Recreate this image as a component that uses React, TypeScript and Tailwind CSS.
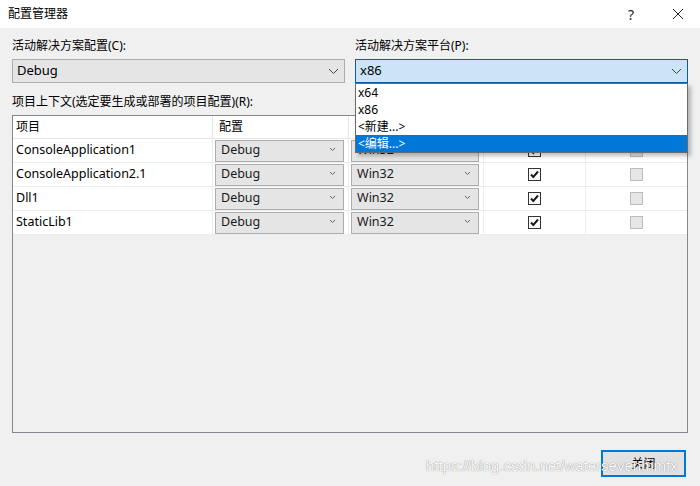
import React from "react";

const font = { fontFamily: '"Segoe UI", "Noto Sans", "Noto Sans CJK SC", sans-serif' };

const Chevron = ({ small = false }: { small?: boolean }) =>
  small ? (
    <svg width="7" height="5" viewBox="0 0 7 5" className="shrink-0 mb-[3px]">
      <polyline points="1,1 3.5,3.5 6,1" fill="none" stroke="#606060" strokeWidth="1" />
    </svg>
  ) : (
    <svg width="11" height="7" viewBox="0 0 11 7" className="shrink-0">
      <polyline points="1,1 5.5,5.5 10,1" fill="none" stroke="#444" strokeWidth="1" />
    </svg>
  );

const CellCombo = ({ value }: { value: string }) => (
  <div className="mx-[2px] h-[22px] w-full flex items-center justify-between border border-[#adadad] bg-[#e5e5e5] pl-[5px] pr-[7px] text-[12.5px] text-[#1a1a1a]">
    <span>{value}</span>
    <Chevron small />
  </div>
);

const Check = ({ checked }: { checked: boolean }) =>
  checked ? (
    <div className="w-[13px] h-[13px] border border-[#333] bg-white flex items-center justify-center">
      <svg width="11" height="11" viewBox="0 0 11 11">
        <polyline points="2,5.5 4.3,8 9,2.5" fill="none" stroke="#1a1a1a" strokeWidth="2" />
      </svg>
    </div>
  ) : (
    <div className="w-[13px] h-[13px] border border-[#bcbcbc] bg-[#e6e6e6]" />
  );

const rows = ["ConsoleApplication1", "ConsoleApplication2.1", "Dll1", "StaticLib1"];

export default function App() {
  return (
    <div className="relative w-[700px] h-[486px] bg-[#f0f0f0] flex flex-col overflow-hidden text-[12px] text-black" style={font}>
      {/* title bar */}
      <div className="h-[28px] bg-white flex items-center pl-[8px] shrink-0">
        <span className="text-[12px]">配置管理器</span>
        <span className="ml-auto text-[14px] text-[#222] mr-[38px]">?</span>
        <svg width="12" height="12" viewBox="0 0 12 12" className="mr-[16px]">
          <path d="M1 1 L11 11 M11 1 L1 11" stroke="#222" strokeWidth="1" />
        </svg>
      </div>

      <div className="flex flex-col px-[12px] pt-[10px]">
        <div className="flex gap-[10px]">
          <div className="w-[333px] flex flex-col">
            <div className="h-[16px] leading-[16px]">活动解决方案配置(C):</div>
            <div className="mt-[5px] h-[24px] border border-[#adadad] bg-[#e5e5e5] flex items-center justify-between pl-[4px] pr-[5px] text-[13px]">
              <span>Debug</span>
              <Chevron />
            </div>
          </div>
          <div className="relative w-[333px] flex flex-col">
            <div className="h-[16px] leading-[16px]">活动解决方案平台(P):</div>
            <div className="mt-[5px] h-[24px] border border-[#0f5ba8] bg-[#cce4f7] flex items-center justify-between pl-[4px] pr-[5px] text-[13px]">
              <span>x86</span>
              <Chevron />
            </div>
            {/* open dropdown list */}
            <div className="absolute left-0 top-[45px] w-[333px] z-10 bg-white border border-[#6a6a6a] flex flex-col text-[12px] shadow-[3px_3px_4px_rgba(0,0,0,0.25)]">
              <div className="h-[17px] leading-[17px] pl-[2px]">x64</div>
              <div className="h-[17px] leading-[17px] pl-[2px]">x86</div>
              <div className="h-[17px] leading-[17px] pl-[2px]">&lt;新建...&gt;</div>
              <div className="h-[17px] leading-[17px] pl-[2px] bg-[#0078d7] text-white">&lt;编辑...&gt;</div>
            </div>
          </div>
        </div>

        <div className="mt-[11px] h-[16px] leading-[16px]">项目上下文(选定要生成或部署的项目配置)(R):</div>

        {/* grid */}
        <div className="mt-[5px] h-[318px] border border-[#828790] bg-[#f0f0f0] flex flex-col">
          <div className="h-[23px] flex bg-white border-b border-[#e5e5e5]">
            <div className="w-[200px] border-r border-[#e5e5e5] flex items-center pl-[3px]">项目</div>
            <div className="w-[136px] border-r border-[#e5e5e5] flex items-center pl-[6px]">配置</div>
            <div className="w-[135px] border-r border-[#e5e5e5]" />
            <div className="w-[102px] border-r border-[#e5e5e5]" />
            <div className="w-[101px]" />
          </div>
          {rows.map((name) => (
            <div key={name} className="h-[24px] flex bg-white border-b border-[#ececec] text-[12.5px]">
              <div className="w-[200px] border-r border-[#ececec] flex items-center pl-[3px]">{name}</div>
              <div className="w-[136px] border-r border-[#ececec] flex items-center pr-[2px]">
                <CellCombo value="Debug" />
              </div>
              <div className="w-[135px] border-r border-[#ececec] flex items-center pr-[2px]">
                <CellCombo value="Win32" />
              </div>
              <div className="w-[102px] border-r border-[#ececec] flex items-center justify-center">
                <Check checked />
              </div>
              <div className="w-[101px] flex items-center justify-center">
                <Check checked={false} />
              </div>
            </div>
          ))}
        </div>

        <div className="flex justify-end mt-[17px] pr-[2px]">
          <div className="w-[85px] h-[27px] border-2 border-[#0078d7] bg-[#e1e1e1] flex items-center justify-center">
            关闭
          </div>
        </div>
      </div>

      <div
        className="absolute left-[426px] top-[455px] text-[15px] text-[#fbfbfb] [text-shadow:0_0_1px_rgba(0,0,0,0.55)] pointer-events-none"
        style={{ fontFamily: '"Liberation Sans", Arial, sans-serif' }}
      >
        https://blog.csdn.net/watersevenmmfx
      </div>
    </div>
  );
}
